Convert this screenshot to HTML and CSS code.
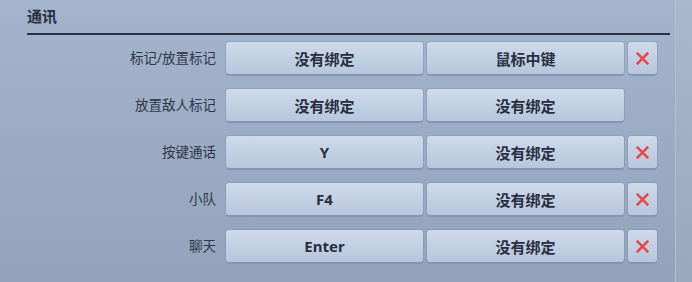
FILE: index.html
```html
<!DOCTYPE html>
<html lang="zh-CN">
<head>
  <meta charset="UTF-8">
  <title>按键绑定</title>
  <link rel="stylesheet" href="styles.css">
</head>
<body>
<div class="page">
  <div class="main">
    <div class="section">
      <h2 class="section-title">通讯</h2>
      <div class="binds">
        <div class="bind-label">标记/放置标记</div>
        <div class="key">没有绑定</div>
        <div class="key">鼠标中键</div>
        <div class="key clear"><svg viewBox="0 0 12 12" width="13" height="13"><path d="M1.5 1.5 L10.5 10.5 M10.5 1.5 L1.5 10.5" stroke="#e5474a" stroke-width="2.4" stroke-linecap="square"/></svg></div>

        <div class="bind-label">放置敌人标记</div>
        <div class="key">没有绑定</div>
        <div class="key">没有绑定</div>
        <div></div>

        <div class="bind-label">按键通话</div>
        <div class="key">Y</div>
        <div class="key">没有绑定</div>
        <div class="key clear"><svg viewBox="0 0 12 12" width="13" height="13"><path d="M1.5 1.5 L10.5 10.5 M10.5 1.5 L1.5 10.5" stroke="#e5474a" stroke-width="2.4" stroke-linecap="square"/></svg></div>

        <div class="bind-label">小队</div>
        <div class="key">F4</div>
        <div class="key">没有绑定</div>
        <div class="key clear"><svg viewBox="0 0 12 12" width="13" height="13"><path d="M1.5 1.5 L10.5 10.5 M10.5 1.5 L1.5 10.5" stroke="#e5474a" stroke-width="2.4" stroke-linecap="square"/></svg></div>

        <div class="bind-label">聊天</div>
        <div class="key">Enter</div>
        <div class="key">没有绑定</div>
        <div class="key clear"><svg viewBox="0 0 12 12" width="13" height="13"><path d="M1.5 1.5 L10.5 10.5 M10.5 1.5 L1.5 10.5" stroke="#e5474a" stroke-width="2.4" stroke-linecap="square"/></svg></div>
      </div>
    </div>
    <div class="section">
      <h2 class="section-title next">资源</h2>
    </div>
  </div>
  <div class="scroll-strip"></div>
</div>
</body>
</html>
```

FILE: styles.css
```css
html,body{
  margin: 0;
  height: 100%;
  overflow: hidden;
}
body{
  font-family: "Noto Sans", "Noto Sans CJK SC", sans-serif;
  color: #2a3244;
  background: linear-gradient(#a4b4cc, #93a3bb);
}
.page{
  display: flex;
  height: 100%;
}
.main{
  width: 675px;
  padding-left: 27px;
  box-sizing: border-box;
}
.scroll-strip{
  flex: 1;
  border-left: 1px solid #b0bfd5;
  background: rgba(255,255,255,.06);
}
.section{
  width: 643px;
}
.section-title{
  margin: 0;
  padding-top: 4px;
  height: 29px;
  font-size: 15px;
  font-weight: bold;
  line-height: 24px;
  color: #262d3c;
  border-bottom: 2px solid #2b3142;
}
.section-title.next{
  margin-top: 12px;
  border-bottom: none;
}
.binds{
  display: grid;
  grid-template-columns: 195px 197px 197px 29px;
  grid-auto-rows: 32px;
  column-gap: 4px;
  row-gap: 15px;
  margin-top: 7px;
}
.bind-label{
  text-align: right;
  font-size: 13.5px;
  line-height: 32px;
  margin-right: 6px;
  color: #2e3647;
}
.key{
  display: flex;
  align-items: center;
  justify-content: center;
  box-sizing: border-box;
  border-radius: 3px;
  background: linear-gradient(#cfdaea, #b6c6dc);
  box-shadow: 0 2px 0 #8495b1, 0 0 0 1px rgba(120,138,168,.35);
  font-size: 15px;
  font-weight: bold;
  color: #272f40;
}
.key.clear svg{
  display: block;
}
```
